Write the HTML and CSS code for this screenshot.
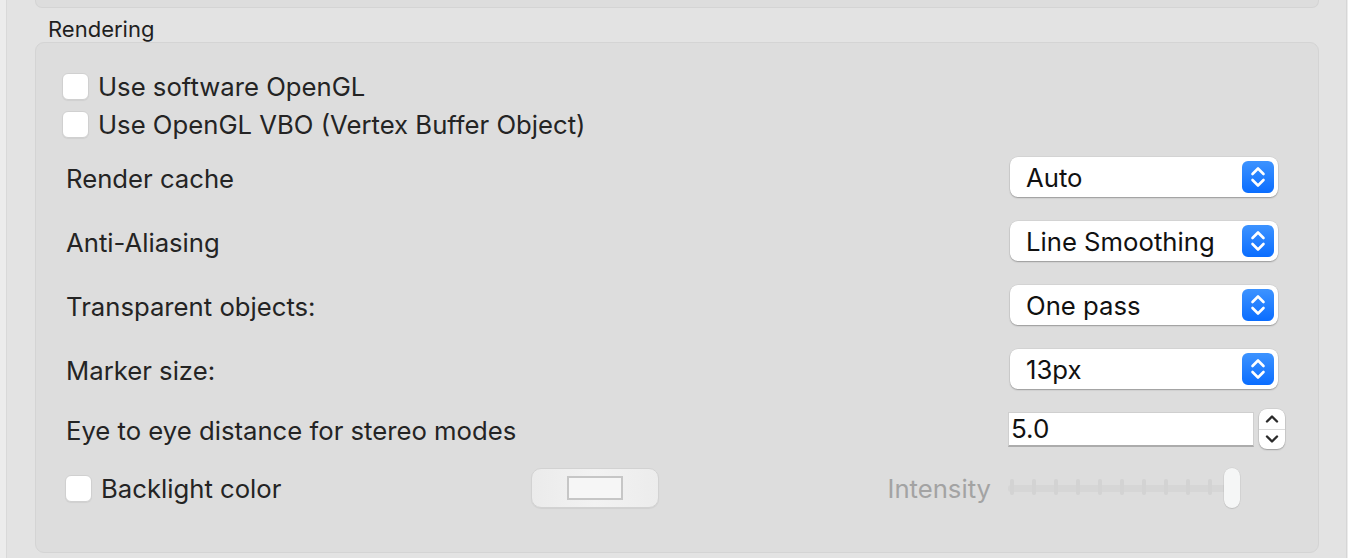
FILE: index.html
```html
<!DOCTYPE html>
<html>
<head>
<meta charset="utf-8">
<link rel="stylesheet" href="styles.css">
</head>
<body>
<div class="pane">
  <div class="top-box"></div>
  <div class="legend">Rendering</div>
  <div class="group">
    <div class="check-row">
      <span class="checkbox"></span><span class="check-text">Use software OpenGL</span>
    </div>
    <div class="check-row">
      <span class="checkbox"></span><span class="check-text">Use OpenGL VBO (Vertex Buffer Object)</span>
    </div>
    <div class="popup-rows">
      <div class="row">
        <span class="label">Render cache</span>
        <div class="popup"><span class="popup-value">Auto</span><span class="popup-arrows"><svg width="32" height="32" viewBox="0 0 32 32"><path d="M10.5 13 L16 7.5 L21.5 13 M10.5 19 L16 24.5 L21.5 19" fill="none" stroke="#fff" stroke-width="2.6" stroke-linecap="round" stroke-linejoin="round"/></svg></span></div>
      </div>
      <div class="row">
        <span class="label">Anti-Aliasing</span>
        <div class="popup"><span class="popup-value">Line Smoothing</span><span class="popup-arrows"><svg width="32" height="32" viewBox="0 0 32 32"><path d="M10.5 13 L16 7.5 L21.5 13 M10.5 19 L16 24.5 L21.5 19" fill="none" stroke="#fff" stroke-width="2.6" stroke-linecap="round" stroke-linejoin="round"/></svg></span></div>
      </div>
      <div class="row">
        <span class="label">Transparent objects:</span>
        <div class="popup"><span class="popup-value">One pass</span><span class="popup-arrows"><svg width="32" height="32" viewBox="0 0 32 32"><path d="M10.5 13 L16 7.5 L21.5 13 M10.5 19 L16 24.5 L21.5 19" fill="none" stroke="#fff" stroke-width="2.6" stroke-linecap="round" stroke-linejoin="round"/></svg></span></div>
      </div>
      <div class="row">
        <span class="label">Marker size:</span>
        <div class="popup"><span class="popup-value">13px</span><span class="popup-arrows"><svg width="32" height="32" viewBox="0 0 32 32"><path d="M10.5 13 L16 7.5 L21.5 13 M10.5 19 L16 24.5 L21.5 19" fill="none" stroke="#fff" stroke-width="2.6" stroke-linecap="round" stroke-linejoin="round"/></svg></span></div>
      </div>
    </div>
    <div class="row eye-row">
      <span class="label">Eye to eye distance for stereo modes</span>
      <div class="spin">
        <div class="field">5.0</div>
        <div class="stepper">
          <span class="step step-up"><svg width="14" height="10" viewBox="0 0 14 10"><path d="M2 7.5 L7 2.5 L12 7.5" fill="none" stroke="#2a2a2a" stroke-width="2.4" stroke-linecap="round" stroke-linejoin="round"/></svg></span>
          <span class="step step-down"><svg width="14" height="10" viewBox="0 0 14 10"><path d="M2 2.5 L7 7.5 L12 2.5" fill="none" stroke="#2a2a2a" stroke-width="2.4" stroke-linecap="round" stroke-linejoin="round"/></svg></span>
        </div>
      </div>
    </div>
    <div class="row backlight-row">
      <div class="bl-check"><span class="checkbox"></span><span class="check-text">Backlight color</span></div>
      <div class="colorwell"><span class="swatch"></span></div>
      <span class="intensity">Intensity</span>
      <div class="slider">
        <div class="track"></div>
        <div class="ticks">
          <span class="tick"></span><span class="tick"></span><span class="tick"></span><span class="tick"></span><span class="tick"></span><span class="tick"></span><span class="tick"></span><span class="tick"></span><span class="tick"></span><span class="tick"></span>
        </div>
        <span class="thumb"></span>
      </div>
    </div>
  </div>
</div>
</body>
</html>
```

FILE: styles.css
```css
* { box-sizing: border-box; }
html, body { margin: 0; padding: 0; }
body {
  background: #ececec;
  width: 1348px;
  height: 558px;
  overflow: hidden;
  font-family: Inter, "Liberation Sans", sans-serif;
  color: #242424;
}
.pane {
  margin-left: 6px;
  width: 1341px;
  height: 558px;
  background: #e3e3e3;
  border-left: 1px solid #d9d9d9;
  border-right: 1px solid #d6d6d6;
  padding: 0 27px 0 28px;
  display: flex;
  flex-direction: column;
}
.top-box {
  height: 8px;
  width: 1284px;
  background: #dddddd;
  border: 1px solid #d4d4d4;
  border-top: none;
  border-radius: 0 0 7px 7px;
}
.legend {
  height: 34px;
  padding-left: 13px;
  font-size: 22px;
  line-height: 26px;
  padding-top: 8px;
  color: #1f1f1f;
}
.group {
  width: 1284px;
  height: 511px;
  background: #dddddd;
  border: 1px solid #d4d4d4;
  border-radius: 9px;
  padding: 24px 0 0 0;
  font-size: 25.7px;
}
.check-row {
  height: 38px;
  display: flex;
  align-items: center;
  padding-left: 26px;
}
.checkbox {
  width: 27px;
  height: 27px;
  background: #fff;
  border: 1px solid #d0d0d0;
  border-radius: 6px;
  box-shadow: 0 1px 1px rgba(0,0,0,0.06);
  flex: none;
}
.check-text {
  margin-left: 9px;
  line-height: 30px;
  padding-top: 2px;
}
.popup-rows { margin-top: 2px; }
.row {
  height: 64px;
  display: flex;
  align-items: center;
  padding-left: 30px;
  padding-right: 40px;
}
.label { line-height: 30px; padding-top: 3px; }
.popup {
  margin-left: auto;
  width: 268px;
  height: 40px;
  background: #fff;
  border-radius: 8px;
  box-shadow: 0 1px 1.5px rgba(0,0,0,0.28), 0 0 0 0.5px rgba(0,0,0,0.08);
  display: flex;
  align-items: center;
  padding-left: 16px;
  padding-right: 4px;
  color: #111;
}
.popup-value { flex: 1; line-height: 30px; padding-top: 2px; }
.popup-arrows {
  width: 32px;
  height: 32px;
  border-radius: 6px;
  background: linear-gradient(#3d93ff, #0a6dff);
  display: flex;
}
.eye-row {
  height: 56px;
  padding-right: 33px;
}
.spin {
  margin-left: auto;
  display: flex;
  align-items: center;
  gap: 5px;
}
.field {
  width: 246px;
  height: 35px;
  background: #fff;
  border: 1px solid #cfcfcf;
  border-bottom: 2px solid #acacac;
  font-size: 26px;
  line-height: 32px;
  padding-left: 2px;
  color: #111;
}
.stepper {
  width: 26px;
  height: 40px;
  background: #fff;
  border-radius: 8px;
  box-shadow: 0 1px 1.5px rgba(0,0,0,0.25), 0 0 0 0.5px rgba(0,0,0,0.1);
  display: flex;
  flex-direction: column;
}
.step {
  flex: 1;
  display: flex;
  align-items: center;
  justify-content: center;
}
.step-up { border-bottom: 1px solid #dcdcdc; padding-top: 1px; }
.step-down { padding-bottom: 1px; }
.backlight-row {
  height: 62px;
  padding-left: 29px;
  padding-right: 78px;
}
.bl-check {
  width: 466px;
  display: flex;
  align-items: center;
}
.colorwell {
  width: 128px;
  height: 40px;
  border-radius: 10px;
  background: linear-gradient(90deg, #ebebeb, #f2f2f2 50%, #ececec);
  border: 1px solid #d2d2d2;
  box-shadow: 0 1px 1px rgba(0,0,0,0.06);
  display: flex;
  align-items: center;
  justify-content: center;
}
.swatch {
  width: 56px;
  height: 24px;
  border: 2px solid #c6c6c6;
  background: #f6f6f6;
}
.intensity {
  margin-left: auto;
  color: #a3a3a3;
  line-height: 30px;
  padding-top: 2px;
  margin-right: 17px;
}
.slider {
  position: relative;
  width: 232px;
  height: 40px;
}
.track {
  position: absolute;
  left: 0;
  right: 8px;
  top: 17px;
  height: 7px;
  background: #d6d6d6;
  border-radius: 3px;
}
.ticks {
  position: absolute;
  left: 2px;
  top: 11px;
  display: flex;
  gap: 18px;
}
.tick {
  width: 4px;
  height: 16px;
  border-radius: 2px;
  background: #d3d3d3;
}
.thumb {
  position: absolute;
  right: 0;
  top: 0;
  width: 16px;
  height: 40px;
  border-radius: 8px;
  background: #f5f6f6;
  box-shadow: 0 0 0 0.5px rgba(0,0,0,0.08), 0 1px 1px rgba(0,0,0,0.1);
}
```
